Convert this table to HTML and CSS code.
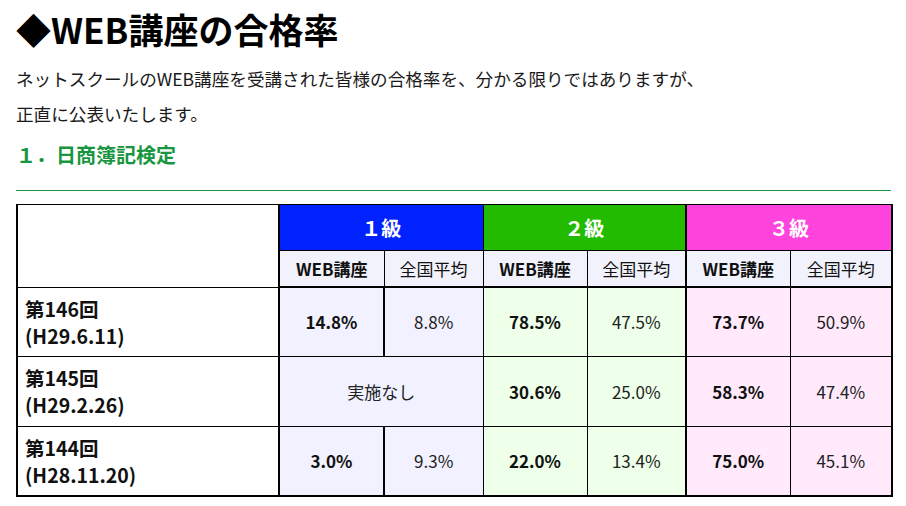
FILE: index.html
```html
<!DOCTYPE html>
<html lang="ja">
<head>
<meta charset="utf-8">
<title>WEB講座の合格率</title>
<link rel="stylesheet" href="styles.css">
</head>
<body>
<main class="page">
  <h1 class="title">◆WEB講座の合格率</h1>
  <p class="lead">ネットスクールのWEB講座を受講された皆様の合格率を、分かる限りではありますが、<br>正直に公表いたします。</p>
  <h2 class="section">１．日商簿記検定</h2>
  <div class="rule"></div>
  <table class="rates">
    <colgroup>
      <col class="c-label">
      <col class="c-1a"><col class="c-1b">
      <col class="c-2a"><col class="c-2b">
      <col class="c-3a"><col class="c-3b">
    </colgroup>
    <thead>
      <tr class="grades">
        <th class="corner" rowspan="2"></th>
        <th class="g1" colspan="2">１級</th>
        <th class="g2" colspan="2">２級</th>
        <th class="g3 sep" colspan="2">３級</th>
      </tr>
      <tr class="subs">
        <th class="web">WEB講座</th><th class="avg">全国平均</th>
        <th class="web">WEB講座</th><th class="avg">全国平均</th>
        <th class="web sep">WEB講座</th><th class="avg">全国平均</th>
      </tr>
    </thead>
    <tbody>
      <tr>
        <th class="label">第146回<br>(H29.6.11)</th>
        <td class="d1 web">14.8%</td><td class="d1 avg thick">8.8%</td>
        <td class="d2 web">78.5%</td><td class="d2 avg">47.5%</td>
        <td class="d3 web sep">73.7%</td><td class="d3 avg">50.9%</td>
      </tr>
      <tr>
        <th class="label">第145回<br>(H29.2.26)</th>
        <td class="d1 avg" colspan="2">実施なし</td>
        <td class="d2 web">30.6%</td><td class="d2 avg">25.0%</td>
        <td class="d3 web sep">58.3%</td><td class="d3 avg">47.4%</td>
      </tr>
      <tr>
        <th class="label">第144回<br>(H28.11.20)</th>
        <td class="d1 web">3.0%</td><td class="d1 avg thick">9.3%</td>
        <td class="d2 web">22.0%</td><td class="d2 avg">13.4%</td>
        <td class="d3 web sep">75.0%</td><td class="d3 avg">45.1%</td>
      </tr>
    </tbody>
  </table>
</main>
</body>
</html>
```
FILE: styles.css
```css
html, body {
  margin: 0;
  padding: 0;
  background: #fff;
}

body {
  font-family: "Noto Sans CJK JP", "Noto Sans", sans-serif;
  color: #222;
}

.page {
  width: 875px;
  padding: 8px 0 0 16px;
}

.title {
  margin: 0;
  font-size: 35px;
  line-height: 42px;
  font-weight: 700;
  color: #000;
}

.lead {
  margin: 11px 0 0;
  font-size: 17.6px;
  line-height: 35px;
  color: #1a1a1a;
}

.section {
  margin: 9px 0 0;
  font-size: 20px;
  line-height: 30px;
  font-weight: 700;
  color: #17963f;
}

.rule {
  margin: 20px 0 0;
  height: 1px;
  background: #17963f;
}

.rates {
  margin-top: 13px;
  width: 875px;
  border-collapse: collapse;
  table-layout: fixed;
  border: 2px solid #000;
  border-top: 1px solid #000;
  font-size: 17px;
}

.c-label { width: 262px; }
.c-1a { width: 105px; }
.c-1b { width: 99px; }
.c-2a { width: 104px; }
.c-2b { width: 99px; }
.c-3a { width: 104px; }
.c-3b { width: 102px; }

.rates th,
.rates td {
  border: 1px solid #000;
  padding: 0;
  text-align: center;
  vertical-align: middle;
}

.grades th {
  height: 45px;
  color: #fff;
  font-size: 20px;
  font-weight: 700;
}

.corner { background: #fff; border-right: 2px solid #000 !important; }
.g1 { background: #0022ff; }
.g2 { background: #22bb00; }
.g3 { background: #ff44dd; }

.subs th {
  height: 35px;
  background: #f2f2fc;
  border-bottom: 2px solid #000;
  color: #111;
}

.web { font-weight: 700; color: #111; }
.avg { font-weight: 400; color: #222; }

.rates .sep { border-left: 2px solid #000; }
.rates .thick { border-left: 2px solid #000; }

tbody tr { height: 69px; }
tbody tr:nth-child(2), tbody tr:nth-child(3) { height: 70px; }

.label {
  text-align: left !important;
  padding-left: 7px !important;
  font-size: 19.5px;
  line-height: 27px;
  font-weight: 700;
  color: #111;
  background: #fff;
  border-right: 2px solid #000 !important;
}

.d1 { background: #f1f1ff; }
.d2 { background: #eeffea; }
.d3 { background: #ffe9fb; }
```
